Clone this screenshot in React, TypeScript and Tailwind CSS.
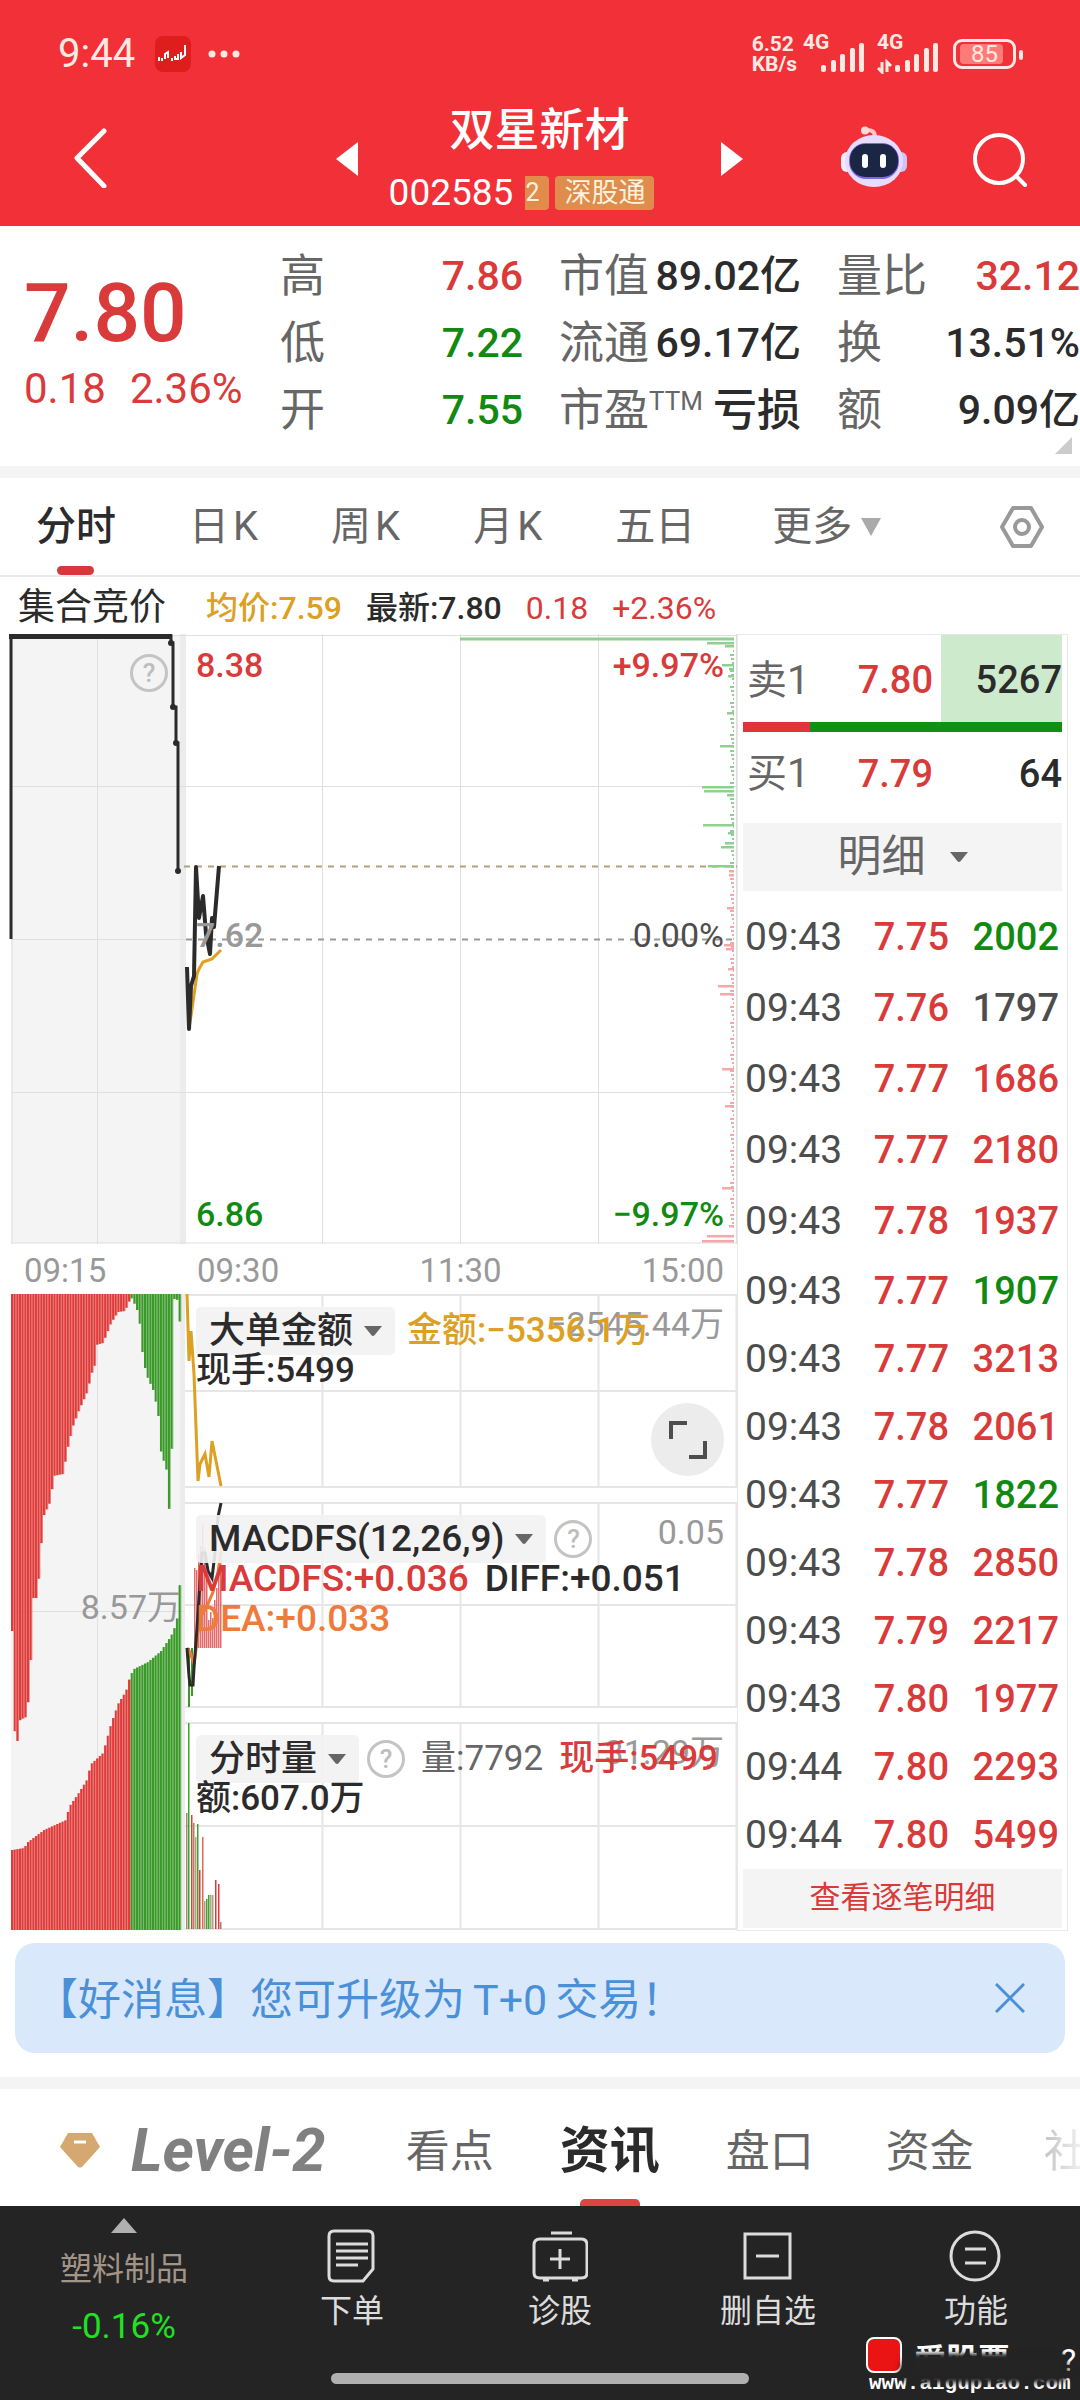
import React from 'react';
import { clsx } from 'clsx';

const RED = '#d93a3a';

type Point = [number, number];

const quoteRows = [
  [
    { label: '高', value: '7.86', color: 'text-[#d93a3a]' },
    { label: '市值', value: '89.02亿', color: 'text-[#2b2b2b]' },
    { label: '量比', value: '32.12', color: 'text-[#d93a3a]' },
  ],
  [
    { label: '低', value: '7.22', color: 'text-[#128a12]' },
    { label: '流通', value: '69.17亿', color: 'text-[#2b2b2b]' },
    { label: '换', value: '13.51%', color: 'text-[#2b2b2b]' },
  ],
  [
    { label: '开', value: '7.55', color: 'text-[#128a12]' },
    { label: '市盈', sup: 'TTM', value: '亏损', color: 'text-[#2b2b2b]' },
    { label: '额', value: '9.09亿', color: 'text-[#2b2b2b]' },
  ],
];

const trades = [
  { time: '09:43', price: '7.75', volume: 2002, side: 'sell' },
  { time: '09:43', price: '7.76', volume: 1797, side: 'flat' },
  { time: '09:43', price: '7.77', volume: 1686, side: 'buy' },
  { time: '09:43', price: '7.77', volume: 2180, side: 'buy' },
  { time: '09:43', price: '7.78', volume: 1937, side: 'buy' },
  { time: '09:43', price: '7.77', volume: 1907, side: 'sell' },
  { time: '09:43', price: '7.77', volume: 3213, side: 'buy' },
  { time: '09:43', price: '7.78', volume: 2061, side: 'buy' },
  { time: '09:43', price: '7.77', volume: 1822, side: 'sell' },
  { time: '09:43', price: '7.78', volume: 2850, side: 'buy' },
  { time: '09:43', price: '7.79', volume: 2217, side: 'buy' },
  { time: '09:43', price: '7.80', volume: 1977, side: 'buy' },
  { time: '09:44', price: '7.80', volume: 2293, side: 'buy' },
  { time: '09:44', price: '7.80', volume: 5499, side: 'buy' },
];

const sideColor: Record<string, string> = {
  buy: 'text-[#d93a3a]',
  sell: 'text-[#128a12]',
  flat: 'text-[#4d4d4d]',
};

// Outline of the auction volume bars hanging from the top edge
const auctionTop: Point[] = [
  [11, 337], [14, 450], [17, 446], [19, 426], [25, 423], [27, 408], [30, 360], [32, 304], [36, 304],
  [39, 268], [42, 223], [50, 206], [52, 182], [62, 180], [67, 152], [72, 132], [78, 116], [87, 96],
  [90, 79], [93, 78], [95, 51], [102, 49], [110, 29], [117, 18], [124, 17], [130, 3], [135, 13],
  [138, 22], [141, 56], [145, 80], [152, 96], [157, 118], [160, 158], [166, 178], [168, 216],
  [170, 216], [172, 12], [174, 1], [176, 6], [179, 31], [181, 31],
];

// Outline of the matched volume bars rising from the bottom edge
const auctionBottom: Point[] = [
  [11, 556], [23, 554], [27, 548], [43, 536], [65, 526], [68, 513], [77, 500], [87, 484], [89, 471],
  [102, 459], [110, 430], [117, 410], [125, 397], [129, 382], [133, 375], [147, 368], [160, 357],
  [170, 342], [175, 330], [178, 312], [179, 276], [181, 276],
];

// [y, length] of the price distribution bars on the right edge
const askProfile: Point[] = [
  [9, 27], [12, 9], [31, 12], [35, 5], [42, 6], [79, 7], [112, 14], [153, 32], [157, 30], [161, 7],
  [191, 31], [199, 6], [209, 9], [213, 13], [232, 26],
];
const bidProfile: Point[] = [
  [237, 5], [241, 5], [274, 7], [311, 10], [315, 8], [335, 6], [352, 16], [360, 14], [435, 12],
  [472, 9], [554, 12], [592, 5], [602, 27], [607, 32],
];

function heightAt(points: Point[], x: number) {
  for (let i = 1; i < points.length; i++) {
    const [x0, y0] = points[i - 1];
    const [x1, y1] = points[i];
    if (x <= x1) return y0 + ((y1 - y0) * (x - x0)) / (x1 - x0);
  }
  return points[points.length - 1][1];
}

const auctionXs = Array.from({ length: 64 }, (_, i) => 11 + i * 2.66);

const macdBars: Point[] = [
  [194, 80], [196, 78], [198, 94], [200, 102], [202, 124], [204, 100], [206, 70], [208, 28],
  [210, 36], [212, 30], [214, 48], [216, 60], [218, 84], [220, 104],
];

const volumeBars = [
  { x: 187, h: 116, c: '#a08a6a' },
  { x: 189, h: 206, c: '#3fa32c' },
  { x: 192, h: 114, c: RED },
  { x: 194, h: 106, c: '#a08a6a' },
  { x: 196, h: 92, c: '#c09a8a' },
  { x: 198, h: 105, c: '#3fa32c' },
  { x: 200, h: 59, c: RED },
  { x: 203, h: 92, c: '#d96a5a' },
  { x: 205, h: 28, c: '#b0a080' },
  { x: 207, h: 30, c: '#3fa32c' },
  { x: 209, h: 34, c: '#3fa32c' },
  { x: 211, h: 34, c: '#b0a080' },
  { x: 213, h: 34, c: '#b0a080' },
  { x: 216, h: 49, c: RED },
  { x: 219, h: 45, c: RED },
  { x: 221, h: 7, c: '#a08080' },
];

const CaretDown = ({ className }: { className?: string }) => (
  <svg viewBox="0 0 18 10" className={clsx('h-[10px] w-[18px]', className)} fill="currentColor" aria-hidden="true">
    <path d="M0 0h18l-7.500 9.200q-1.500 1.400-3 0z" />
  </svg>
);

const HelpButton = ({ className }: { className?: string }) => (
  <button
    aria-label="帮助"
    className={clsx(
      'flex h-[38px] w-[38px] items-center justify-center rounded-full border-3 border-[#c4c4c4] text-[26px] leading-none text-[#bdbdbd]',
      className
    )}
  >
    ?
  </button>
);

const SignalBars = () => (
  <>
    <rect x="0" y="22" width="5" height="7" rx="2" />
    <rect x="10" y="17" width="5" height="12" rx="2" />
    <rect x="19" y="11" width="5" height="18" rx="2" />
    <rect x="29" y="5" width="5" height="24" rx="2" />
    <rect x="38" y="0" width="5" height="29" rx="2" />
  </>
);

const StatusBar = () => (
  <div className="flex h-[108px] items-center justify-between pr-16 pl-[58px] text-[#ffe9e2]">
    <div className="flex items-center">
      <span className="text-[40px]">9:44</span>
      <svg viewBox="0 0 36 36" className="ml-5 h-9 w-9">
        <rect width="36" height="36" rx="8" fill="#e01d1d" />
        <path d="M4 25v-4M7 25v-3M10 23v-5l3-2v6M17 22v3M20 20v3h3v-5M26 16v6l4-3V9" stroke="#fff" strokeWidth="2" fill="none" />
      </svg>
      <svg viewBox="0 0 32 8" className="ml-[17px] h-2 w-8" fill="currentColor">
        <circle cx="4" cy="4" r="3.500" />
        <circle cx="16" cy="4" r="3.500" />
        <circle cx="28" cy="4" r="3.500" />
      </svg>
    </div>
    <div className="flex items-center">
      <div className="text-[21px] leading-[20px] font-bold">
        <div>6.52</div>
        <div>KB/s</div>
      </div>
      <div className="relative ml-1.5 h-[40px] w-[62px]">
        <span className="absolute -top-1 left-0 text-[21px] leading-[24px] font-bold">4G</span>
        <svg viewBox="0 0 62 40" className="h-full w-full" fill="currentColor">
          <g transform="translate(18 9)">
            <SignalBars />
          </g>
        </svg>
      </div>
      <div className="relative ml-3 h-[40px] w-[62px]">
        <span className="absolute -top-1 left-0 text-[21px] leading-[24px] font-bold">4G</span>
        <svg viewBox="0 0 62 40" className="h-full w-full" fill="currentColor">
          <path d="M5 28v10l-4-4M10 38V28l4 4" stroke="currentColor" strokeWidth="3" fill="none" />
          <g transform="translate(18 9)">
            <SignalBars />
          </g>
        </svg>
      </div>
      <div className="relative ml-[14px] flex h-[30px] w-[63px] items-center justify-center rounded-[9px] border-3 border-current">
        <span className="absolute top-[2px] left-1 h-5 w-[43px] rounded-sm bg-[#ff7b78]" />
        <span className="relative text-[24px] leading-none">85</span>
        <span className="absolute top-2 -right-[10px] h-[10px] w-1 rounded-sm bg-current" />
      </div>
    </div>
  </div>
);

const Robot = () => (
  <svg viewBox="0 0 66 62" className="h-[62px] w-[66px]">
    <path d="M24 4q10-1 10 7" stroke="#ffc8cc" strokeWidth="4" fill="none" />
    <circle cx="24" cy="4.500" r="4" fill="#ffd9dc" />
    <rect x="0" y="26" width="12" height="20" rx="6" fill="#f3ecff" />
    <rect x="54" y="26" width="12" height="20" rx="6" fill="#cfc4f8" />
    <ellipse cx="33" cy="35" rx="29" ry="26" fill="#e6dcff" />
    <rect x="8" y="17" width="50" height="36" rx="17" fill="#7f66e6" />
    <rect x="9" y="18" width="48" height="33" rx="15" fill="#1b2644" />
    <rect x="21" y="28" width="6" height="14" rx="3" fill="#fff" />
    <rect x="39" y="28" width="6" height="14" rx="3" fill="#fff" />
  </svg>
);

const Header = () => (
  <header className="bg-[#f13037] text-white">
    <StatusBar />
    <div className="flex h-[118px] items-start">
      <button aria-label="返回" className="mt-5 ml-[72px]">
        <svg viewBox="0 0 36 60" className="h-[60px] w-9" fill="none" stroke="#fff" strokeWidth="5">
          <path d="M32 3L5 30l27 28" strokeLinecap="round" strokeLinejoin="round" />
        </svg>
      </button>
      <div className="flex flex-1 items-start justify-end pr-[34px]">
        <button aria-label="上一只" className="mt-[34px]">
          <svg viewBox="0 0 22 34" className="h-[34px] w-[22px]" fill="#fff">
            <path d="M22 0v34L0 17z" />
          </svg>
        </button>
        <div className="flex w-[363px] flex-col items-center">
          <h1 className="text-[45px] leading-[45px] font-medium">双星新材</h1>
          <div className="mt-5 flex items-center pr-9">
            <span className="text-[37px] leading-[40px]">002585</span>
            <span className="ml-3 h-[34px] w-6 rounded-r-[4px] bg-[#e08c4c] text-[25px] leading-[34px] text-[#fff1dc]">2</span>
            <span className="ml-1.5 h-[34px] rounded-[4px] bg-[#e08c4c] px-[9px] text-[27px] leading-[34px] text-[#fff1dc]">
              深股通
            </span>
          </div>
        </div>
        <button aria-label="下一只" className="mt-[34px]">
          <svg viewBox="0 0 22 34" className="h-[34px] w-[22px]" fill="#fff">
            <path d="M0 0v34l22-17z" />
          </svg>
        </button>
      </div>
      <button aria-label="智能助手" className="mt-[18px] ml-16">
        <Robot />
      </button>
      <button aria-label="搜索" className="mt-6 mr-[52px] ml-[65px]">
        <svg viewBox="0 0 56 56" className="h-14 w-14" fill="none" stroke="#fff" strokeWidth="4">
          <circle cx="27" cy="27" r="24" />
          <path d="M44 44l9 9" strokeLinecap="round" />
        </svg>
      </button>
    </div>
  </header>
);

const Quote = () => (
  <section className="relative box-content flex h-[240px] border-b-12 border-[#f4f4f4] text-[45px]">
    <div className="w-[280px] pt-[45px] pl-6 text-[#d93a3a]">
      <div className="text-[82px] leading-[84px] font-medium">7.80</div>
      <div className="mt-3 flex gap-6 text-[42px] leading-[44px]">
        <span>0.18</span>
        <span>2.36%</span>
      </div>
    </div>
    <div className="flex flex-1 flex-col pt-[17px]">
      {quoteRows.map((row, i) => (
        <div key={i} className="grid h-[67px] grid-cols-[243px_242px_1fr] items-center gap-x-9">
          {row.map((cell) => (
            <div key={cell.label} className="flex items-center justify-between whitespace-nowrap">
              <span className="flex items-start text-[#666666]">
                {cell.label}
                {'sup' in cell && <span className="pt-1 text-[26px] leading-[40px]">{cell.sup}</span>}
              </span>
              <span className={clsx('font-medium', cell.label === '市盈' ? 'text-[44px]' : 'text-[41px]', cell.color)}>
                {cell.value}
              </span>
            </div>
          ))}
        </div>
      ))}
    </div>
    <svg viewBox="0 0 17 17" className="absolute right-2 bottom-3 h-[17px] w-[17px]" fill="#cccccc">
      <path d="M17 0v17H0z" />
    </svg>
  </section>
);

const periodTabs = ['分时', '日 K', '周 K', '月 K', '五日', '更多'];

const PeriodTabs = () => (
  <nav className="flex h-[99px] items-center border-b-2 border-[#ebebeb] pr-9 pl-9 text-[40px] text-[#666666]">
    <div className="flex flex-1 items-center gap-[73px]">
      {periodTabs.map((tab) => (
        <button
          key={tab}
          className={clsx(
            'relative flex h-[97px] items-center gap-1 whitespace-nowrap',
            tab === '分时' && 'font-medium text-[#2b2b2b]',
            tab === '更多' && 'ml-1'
          )}
        >
          {tab.split(' ').map((part) => (
            <span key={part}>{part}</span>
          ))}
          {tab === '分时' && <span className="absolute bottom-0 left-[21px] h-[9px] w-[37px] rounded-[5px] bg-[#d9383a]" />}
          {tab === '更多' && (
            <svg viewBox="0 0 20 18" className="ml-[5px] h-[18px] w-5" fill="#aaaaaa">
              <path d="M0 0h20L10 18z" />
            </svg>
          )}
        </button>
      ))}
    </div>
    <button aria-label="设置">
      <svg viewBox="0 0 44 44" className="h-11 w-11" fill="none" stroke="#999" strokeWidth="4" strokeLinejoin="round">
        <path d="M13 3h18l11 19-11 19H13L2 22z" />
        <circle cx="22" cy="22" r="7" />
      </svg>
    </button>
  </nav>
);

const InfoRow = () => (
  <div className="flex h-[57px] items-center pt-1 pl-[18px] text-[32px] whitespace-nowrap">
    <span className="text-[37px] text-[#2b2b2b]">集合竞价</span>
    <span className="ml-10 font-medium text-[#dda022]">均价:7.59</span>
    <span className="ml-6 font-medium text-[#2b2b2b]">最新:7.80</span>
    <span className="ml-6 text-[#d93a3a]">0.18</span>
    <span className="ml-6 text-[#d93a3a]">+2.36%</span>
  </div>
);

const MainChart = () => (
  <div className="relative text-[34px] leading-10 font-medium">
    <svg viewBox="0 0 737 610" className="block w-full">
      <rect x="11" y="1" width="169" height="608" fill="#f4f4f4" />
      <rect x="180" y="0" width="6" height="610" fill="#ececec" />
      <path
        d="M11 1.500H737M11 152.500H737M11 305.500H186M11 458.500H737M11 609H737M12 0V610M97.500 0V610M322.500 0V610M460.500 0V610M598.500 0V610M736.500 0V610"
        stroke="#dfdfdf"
        strokeWidth="1"
      />
      <path d="M186 305.500H737" stroke="#999" strokeWidth="2" strokeDasharray="6 6" />
      <path d="M184 232.500H737" stroke="#b0a27c" strokeWidth="2" strokeDasharray="6 6" />

      {/* Price distribution */}
      <path d="M460 5H734" stroke="#8fcf8f" strokeWidth="3" />
      {askProfile.map(([y, len]) => (
        <rect key={y} x={734 - len} y={y - 1} width={len} height="2.500" fill="#8fcf8f" />
      ))}
      {bidProfile.map(([y, len]) => (
        <rect key={y} x={734 - len} y={y - 1} width={len} height="2.500" fill="#f3a9a9" />
      ))}
      {Array.from({ length: 145 }, (_, i) => {
        const y = 16 + i * 4;
        const len = 1 + ((i * 7) % 4);
        return <rect key={i} x={734 - len} y={y} width={len} height="2" fill={y < 234 ? '#8fcf8f' : '#f3a9a9'} />;
      })}

      {/* Auction price */}
      <path d="M11 305V2H171V9H173V73H176V109H178V237" fill="none" stroke="#2b2b2b" strokeWidth="3" />
      <path d="M9 2.500H172" stroke="#2b2b2b" strokeWidth="5" />
      {[[171, 9], [173, 73], [176, 109], [178, 237]].map(([x, y]) => (
        <circle key={y} cx={x} cy={y} r="3" fill="#2b2b2b" />
      ))}

      <path d="M189 394L191 382L197 340L199 335L203 328L212 325L221 316" fill="none" stroke="#dda022" strokeWidth="3" />
      <path
        d="M187 333L189 395L191 352L194 342L196 233L199 284L203 262L206 300L210 320L212 284L214 293L219 232"
        fill="none"
        stroke="#2b2b2b"
        strokeWidth="4"
        strokeLinejoin="round"
      />
    </svg>
    <HelpButton className="absolute top-[20px] left-[130px]" />
    <span className="absolute top-[11px] left-[196px] text-[#d93a3a]">8.38</span>
    <span className="absolute top-[11px] right-[13px] text-[#d93a3a]">+9.97%</span>
    <span className="absolute top-[281px] left-[196px] text-[#999999]">7.62</span>
    <span className="absolute top-[281px] right-[13px] font-normal text-[#4d4d4d]">0.00%</span>
    <span className="absolute bottom-[10px] left-[196px] text-[#128a12]">6.86</span>
    <span className="absolute right-[13px] bottom-[10px] text-[#128a12]">−9.97%</span>
  </div>
);

const TimeAxis = () => (
  <div className="flex h-[50px] items-center pt-1 pr-[13px] text-[33px] text-[#999999]">
    <span className="w-[173px] pl-6">09:15</span>
    <div className="flex flex-1 justify-between pl-6">
      <span>09:30</span>
      <span>11:30</span>
      <span>15:00</span>
    </div>
  </div>
);

const AuctionVolume = () => (
  <div className="relative w-[185px] shrink-0">
    <svg viewBox="0 0 185 637" className="block w-full">
      <rect x="11" y="0" width="169" height="636" fill="#f4f4f4" />
      <rect x="180" y="0" width="5" height="636" fill="#ececec" />
      <path d="M11 317.500H185M97.500 0V636" stroke="#dfdfdf" strokeWidth="1" />
      {auctionXs.map((x) => {
        const color = x < 129 ? '#e03a38' : '#3a9a28';
        const top = heightAt(auctionTop, x);
        const bottom = heightAt(auctionBottom, x);
        return (
          <g key={x} fill={color}>
            <rect x={x} y="0" width="2" height={top} />
            <rect x={x} y={bottom} width="2" height={636 - bottom} />
            <g opacity="0.700">
              <rect x={x + 2} y="0" width="0.700" height={top} />
              <rect x={x + 2} y={bottom} width="0.700" height={636 - bottom} />
            </g>
          </g>
        );
      })}
    </svg>
    <span className="absolute top-[293px] right-1 text-[34px] leading-10 text-[#999999]">8.57万</span>
  </div>
);

interface PanelProps {
  height: number;
  className: string;
  scale: string;
  drawing: React.ReactNode;
  children: React.ReactNode;
}

const Panel = ({ height, className, scale, drawing, children }: PanelProps) => (
  <div className={clsx('relative leading-10 font-medium whitespace-nowrap text-[#2b2b2b]', className)}>
    <svg viewBox={`185 0 552 ${height}`} preserveAspectRatio="xMinYMin meet" className="absolute inset-0 h-full w-full">
      <path
        d={`M185 1H737M185 ${height / 2}H737M185 ${height - 1}H737M322.500 0V${height}M460.500 0V${height}M598.500 0V${height}M736.500 0V${height}`}
        stroke="#e6e6e6"
        strokeWidth="2"
      />
      {drawing}
    </svg>
    <span className="absolute top-[10px] right-[13px] text-[34px] font-normal text-[#999999]">{scale}</span>
    <div className="relative pt-[13px] pl-[11px]">{children}</div>
  </div>
);

const Chip = ({ children }: { children: React.ReactNode }) => (
  <button className="flex h-12 items-center gap-[11px] rounded-[5px] bg-[#f2f2f2]/90 px-[13px] text-[36px]">
    {children}
    <CaretDown className="text-[#666666]" />
  </button>
);

const Charts = () => (
  <div className="min-w-0 flex-1">
    <MainChart />
    <TimeAxis />
    <div className="flex">
      <AuctionVolume />
      <div className="flex min-w-0 flex-1 flex-col gap-[14px]">
        <Panel
          height={194}
          className="h-[194px] text-[35px]"
          scale="−2545.44万"
          drawing={
            <path
              d="M187 0L189 67L191 37L194 80L198 187L200 170L205 160L209 183L212 147L221 192"
              fill="none"
              stroke="#dda022"
              strokeWidth="3"
            />
          }
        >
          <div className="flex items-center gap-3">
            <Chip>大单金额</Chip>
            <span className="text-[#dda022]">金额:−5356.1万</span>
          </div>
          <div className="-mt-1">现手:5499</div>
          <button
            aria-label="全屏"
            className="absolute top-[109px] right-[13px] flex h-[73px] w-[73px] items-center justify-center rounded-full bg-[#ececec]"
          >
            <svg viewBox="0 0 38 38" className="h-[38px] w-[38px]" fill="none" stroke="#4d4d4d" strokeWidth="4">
              <path d="M2 18V2H18M36 20V36H20" />
            </svg>
          </button>
        </Panel>
        <Panel
          height={206}
          className="h-[206px] text-[37px]"
          scale="0.05"
          drawing={
            <>
              {macdBars.map(([x, h]) => (
                <rect key={x} x={x} y={146 - h} width="1.500" height={h} fill="#e0464a" opacity="0.800" />
              ))}
              <rect x="188" y="146" width="2" height="59" fill="#3a9a28" />
              <rect x="191" y="146" width="2" height="48" fill="#3a9a28" />
              <path
                d="M187 146L190 150L194 162L197 140L199 118L207 104L213 90L218 70L221 50"
                fill="none"
                stroke="#ee7b3c"
                strokeWidth="3"
              />
              <path
                d="M187 146L189 174L190 183L193 183L194 166L197 126L199 95L202 51L205 51L208 69L212 76L215 51L218 15L221 1"
                fill="none"
                stroke="#2b2b2b"
                strokeWidth="3"
              />
            </>
          }
        >
          <div className="flex items-center gap-2">
            <Chip>
              <span className="text-[37px]">MACDFS(12,26,9)</span>
            </Chip>
            <HelpButton />
          </div>
          <div className="-mt-1 flex gap-4">
            <span className="text-[#d93a3a]">MACDFS:+0.036</span>
            <span>DIFF:+0.051</span>
          </div>
          <div className="text-[#ee7b3c]">DEA:+0.033</div>
        </Panel>
        <Panel
          height={208}
          className="h-[208px] text-[35px]"
          scale="31.29万"
          drawing={volumeBars.map(({ x, h, c }) => (
            <rect key={x} x={x - 1} y={207 - h} width="1.500" height={h} fill={c} />
          ))}
        >
          <div className="flex items-center gap-2">
            <Chip>分时量</Chip>
            <HelpButton />
            <span className="ml-2 font-normal text-[#666666]">量:7792</span>
            <span className="ml-2 text-[#d93a3a]">现手:5499</span>
          </div>
          <div className="-mt-1">额:607.0万</div>
        </Panel>
      </div>
    </div>
  </div>
);

const OrderPanel = () => (
  <aside className="w-[331px] shrink-0 border border-[#e8e8e8] px-[5px] text-[38px] text-[#666666]">
    <div className="flex h-[87px] items-center">
      <span className="flex-1 pt-1 pl-1 text-[40px]">卖1</span>
      <span className="pt-1 pr-2 font-medium text-[#d93a3a]">7.80</span>
      <span className="flex h-full w-[121px] items-center justify-end bg-[#cdeacd] pt-1 font-medium text-[#2b2b2b]">5267</span>
    </div>
    <div className="flex h-[10px]">
      <span className="w-[21%] bg-[#e23338]" />
      <span className="flex-1 bg-[#129012]" />
    </div>
    <div className="flex h-[84px] items-center">
      <span className="flex-1 pl-1 text-[40px]">买1</span>
      <span className="pr-2 font-medium text-[#d93a3a]">7.79</span>
      <span className="w-[121px] text-right font-medium text-[#2b2b2b]">64</span>
    </div>
    <button className="mt-[7px] flex h-[68px] w-full items-center justify-center gap-6 bg-[#f4f4f4] text-[44px]">
      明细
      <CaretDown className="text-[#666666]" />
    </button>
    <table className="mt-[11px] w-full font-medium">
      <tbody>
        {trades.map((t, i) => (
          <tr key={i} className={i < 5 ? 'h-[71px]' : 'h-[68px]'}>
            <td className="p-0 pl-[2px] text-[39px] font-normal text-[#4d4d4d]">{t.time}</td>
            <td className="w-[88px] p-0 text-right text-[#d93a3a]">{t.price}</td>
            <td className={clsx('w-[113px] p-0 pr-[3px] text-right', sideColor[t.side])}>{t.volume}</td>
          </tr>
        ))}
      </tbody>
    </table>
    <button className="flex h-[59px] w-full items-center justify-center bg-[#f4f4f4] text-[31px] text-[#d93a3a]">
      查看逐笔明细
    </button>
  </aside>
);

const Banner = () => (
  <div className="mx-[15px] mt-3 flex h-[110px] items-center justify-between rounded-[20px] bg-[#d9e8fb] pr-10 pl-5 text-[43px] text-[#4a90d9]">
    <span className="pt-1">
      【好消息】您可升级为<span className="mx-2">T+0</span>交易！
    </span>
    <button aria-label="关闭">
      <svg viewBox="0 0 30 30" className="h-[30px] w-[30px]" stroke="currentColor" strokeWidth="3">
        <path d="M1 1l28 28M29 1L1 29" />
      </svg>
    </button>
  </div>
);

const SectionTabs = () => (
  <nav className="mt-6 flex h-[129px] items-center overflow-hidden border-t-12 border-[#f4f4f4] pl-[59px] text-[44px] whitespace-nowrap text-[#666666]">
    <svg viewBox="0 0 42 36" className="mt-1 h-9 w-[42px] shrink-0">
      <path d="M9 1h24l8 14-18 20q-2 1-4 0L1 15z" fill="#d4a870" />
      <path d="M15 10h12" stroke="#fff" strokeWidth="3" />
    </svg>
    <button className="ml-[30px] pt-1.5 text-[60px] leading-[64px] font-bold text-[#808080] italic">Level-2</button>
    <div className="flex h-full flex-1 items-center gap-[66px] pl-20">
      <button className="pt-2">看点</button>
      <button className="relative h-full pt-2 text-[50px] font-bold text-[#2b2b2b]">
        资讯
        <span className="absolute bottom-0 left-5 h-[7px] w-[60px] rounded-t-[5px] bg-[#e04343]" />
      </button>
      <button className="pt-2">盘口</button>
      <button className="ml-1.5 pt-2">资金</button>
      <button className="ml-1 bg-linear-to-r from-[#c4c4c4] to-[#f8f8f8] bg-clip-text pt-2 text-transparent">社</button>
    </div>
  </nav>
);

const footerItems = [
  {
    label: '下单',
    icon: <path d="M6 3h34q5 0 5 5v33L35 53H6q-5 0-5-5V8q0-5 5-5zM8 16h32M8 23h32M8 30h32M8 37h22" />,
  },
  {
    label: '诊股',
    icon: (
      <path d="M15 5h21M4 11h41q6 0 6 6v28q0 5-6 5H4q-6 0-6-5V17q0-6 6-6zM24 21v20M14 31h20M7 52h6M36 52h6" />
    ),
  },
  { label: '删自选', icon: <path d="M1 6h45v44H1zM12 28h23" /> },
  {
    label: '功能',
    icon: (
      <>
        <circle cx="23" cy="28" r="24" />
        <path d="M13 21h21M13 35h21" />
      </>
    ),
  },
];

const Footer = () => (
  <footer className="relative h-[194px] overflow-hidden bg-[#242424] text-[#dcdcdc]">
    <div className="flex">
      <button className="flex w-[248px] flex-col items-center pt-3">
        <svg viewBox="0 0 26 15" className="h-[15px] w-[26px]" fill="#b0b0b0">
          <path d="M13 0l13 15H0z" />
        </svg>
        <span className="mt-4 text-[32px] leading-[40px] text-[#a39488]">塑料制品</span>
        <span className="mt-[18px] text-[35px] leading-[40px] text-[#22e022]">-0.16%</span>
      </button>
      <div className="grid flex-1 grid-cols-4">
        {footerItems.map((item) => (
          <button key={item.label} className="flex flex-col items-center pt-[22px] text-[32px] leading-[40px]">
            <svg viewBox="-4 0 56 56" className="h-14 w-14" fill="none" stroke="currentColor" strokeWidth="3">
              {item.icon}
            </svg>
            <span className="mt-[7px]">{item.label}</span>
          </button>
        ))}
      </div>
    </div>
    <div className="absolute bottom-4 left-1/2 h-[11px] w-[418px] -translate-x-1/2 rounded-full bg-[#b0b0b0]" />

    {/* Site mark, partly smudged */}
    <div className="absolute right-0 bottom-0 h-[66px] w-[214px] overflow-hidden text-white">
      <div className="absolute top-[3px] left-0 h-9 w-9 rounded-[8px] border-2 border-white bg-[#ea1414]" />
      <div className="absolute top-2 left-12 text-[32px] leading-[36px] font-bold">爱股票</div>
      <div className="absolute top-2.5 right-1 text-[32px] leading-8">?</div>
      <div className="absolute bottom-1 left-[3px] font-['Liberation_Mono'] text-[21px] leading-6 font-bold">www.aigupiao.com</div>
      <div className="absolute top-[24px] right-3 left-[34px] h-[24px] rounded-full bg-[#242424] blur-[3px]" />
      <div className="absolute top-[20px] right-4 left-[44px] h-[26px] bg-[#242424] blur-[2px]" />
    </div>
  </footer>
);

export default function App() {
  return (
    <div className="overflow-hidden bg-white font-['Roboto','Noto_Sans_CJK_SC',sans-serif]">
      <Header />
      <Quote />
      <PeriodTabs />
      <InfoRow />
      <main className="flex pr-3">
        <Charts />
        <OrderPanel />
      </main>
      <Banner />
      <SectionTabs />
      <Footer />
    </div>
  );
}
